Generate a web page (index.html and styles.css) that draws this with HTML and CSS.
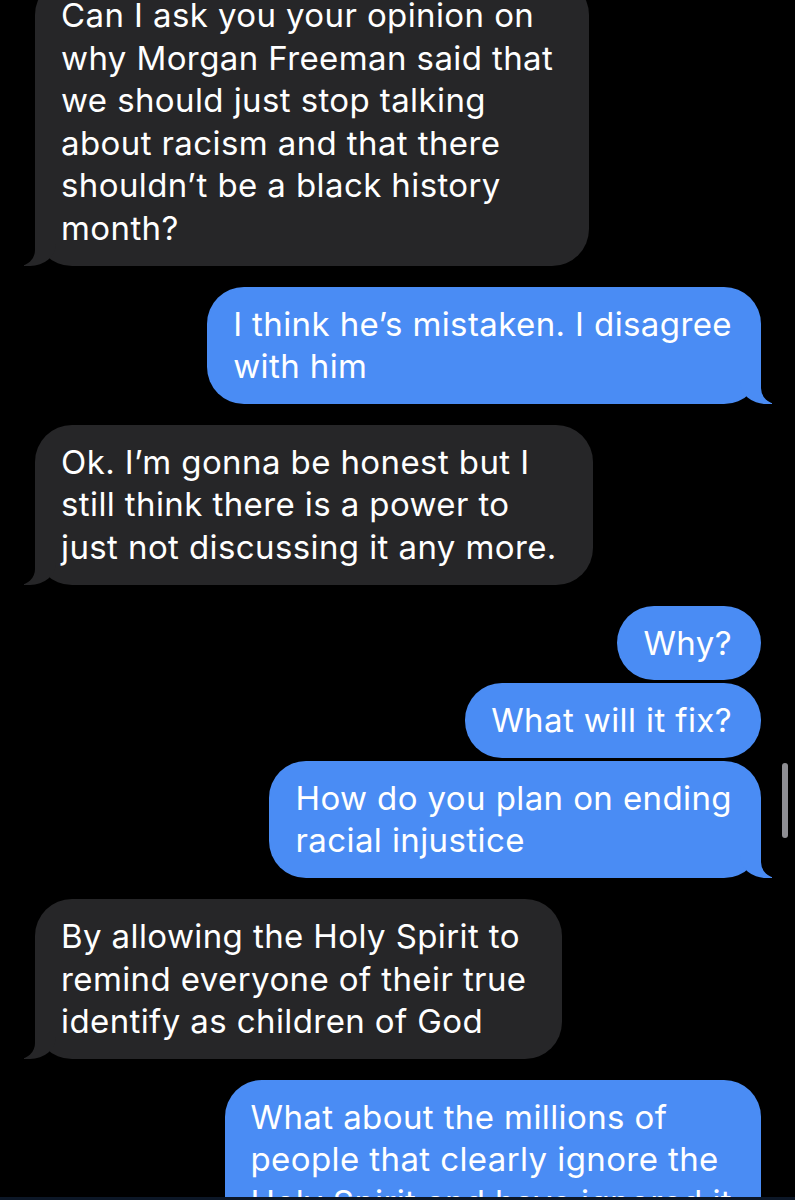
FILE: index.html
```html
<!DOCTYPE html>
<html lang="en">
<head>
    <meta charset="UTF-8">
    <title>Messages</title>
    <link rel="stylesheet" href="styles.css">
</head>
<body>
    <div class="screen">
        <div class="thread">
            <div class="msg them tail">Can I ask you your opinion on<br>why Morgan Freeman said that<br>we should just stop talking<br>about racism and that there<br>shouldn’t be a black history<br>month?</div>

            <div class="msg me tail group">I think he’s mistaken. I disagree<br>with him</div>

            <div class="msg them tail group">Ok. I’m gonna be honest but I<br>still think there is a power to<br>just not discussing it any more.</div>

            <div class="msg me group">Why?</div>
            <div class="msg me">What will it fix?</div>
            <div class="msg me tail">How do you plan on ending<br>racial injustice</div>

            <div class="msg them tail group">By allowing the Holy Spirit to<br>remind everyone of their true<br>identify as children of God</div>

            <div class="msg me group">What about the millions of<br>people that clearly ignore the<br>Holy Spirit and have ignored it</div>

            <!-- scroll indicator sits over the thread -->
            <div class="scroll-thumb"></div>
        </div>
        <div class="edge"></div>
    </div>
</body>
</html>
```

FILE: styles.css
```css
body {
    margin: 0;
    background: #000;
    font-family: Inter, "Noto Sans", sans-serif;
    color: #fff;
}
.screen {
    height: 1200px;
    display: flex;
    flex-direction: column;
    overflow: hidden;
}
.thread {
    position: relative;
    flex: 1;
    display: flex;
    flex-direction: column;
    gap: 3px;
    overflow: hidden;
}
.msg {
    position: relative;
    white-space: nowrap;
    font-size: 33px;
    line-height: 42.6px;
    letter-spacing: 0.4px;
    border-radius: 37px;
    padding: 16px 36px 16px 26px;
}
.msg:first-child {
    margin-top: -22px;
}
.group {
    margin-top: 18px;
}
.them {
    align-self: flex-start;
    margin-left: 35px;
    background: #262628;
}
.me {
    align-self: flex-end;
    margin-right: 34px;
    padding-right: 29px;
    background: #4a8cf4;
}

/* bubble tails */
.tail::before,
.tail::after {
    content: "";
    position: absolute;
    bottom: 0;
    height: 40px;
}
.me.tail::before {
    right: -11px;
    width: 32px;
    background: #4a8cf4;
    border-bottom-left-radius: 26px 22px;
}
.me.tail::after {
    right: -42px;
    width: 42px;
    background: #000;
    border-bottom-left-radius: 16px;
}
.them.tail::before {
    left: -11px;
    width: 32px;
    background: #262628;
    border-bottom-right-radius: 26px 22px;
}
.them.tail::after {
    left: -42px;
    width: 42px;
    background: #000;
    border-bottom-right-radius: 16px;
}

.scroll-thumb {
    position: absolute;
    top: 763px;
    right: 7px;
    width: 6px;
    height: 75px;
    border-radius: 3px;
    background: #8e8e93;
}
.edge {
    height: 3px;
    background: #0c1727;
}
```
